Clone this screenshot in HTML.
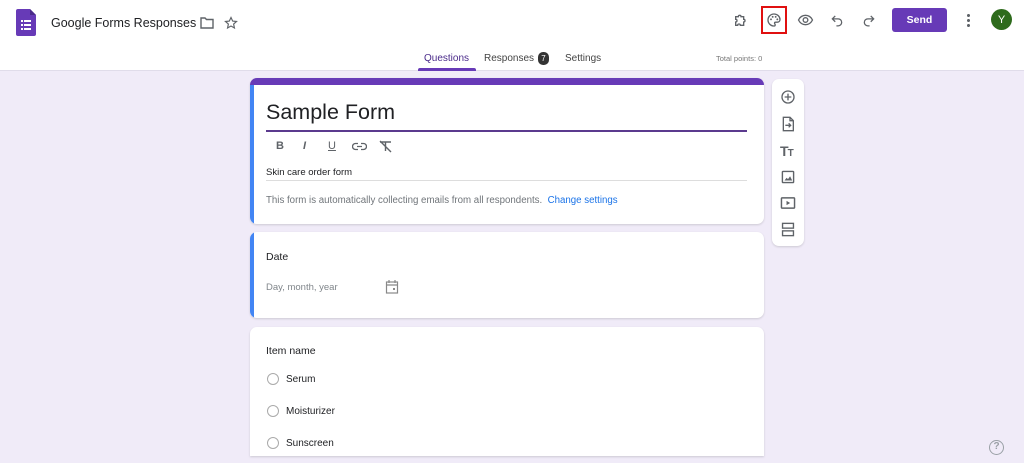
<!DOCTYPE html>
<html><head><meta charset="utf-8"><style>
*{box-sizing:border-box;margin:0;padding:0}
body{width:1024px;height:463px;overflow:hidden;background:#f0ebf8;font-family:"Liberation Sans",Arial,sans-serif;color:#202124;position:relative}
.hdr{position:absolute;left:0;top:0;width:1024px;height:71px;background:#fff;border-bottom:1px solid #e0dcea}
.abs{position:absolute}
.card{position:absolute;background:#fff;border-radius:7px;box-shadow:0 1px 2px rgba(0,0,0,.15)}
.t{font-size:10px;color:#202124}
svg{position:absolute}
.radio{position:absolute;width:12px;height:12px;border:1px solid #aaa;border-radius:50%}
</style></head><body>
<div class="hdr">
 <svg style="left:16px;top:9px" width="20" height="27" viewBox="0 0 20 27"><path d="M2 0h12l6 6v19a2 2 0 0 1-2 2H2a2 2 0 0 1-2-2V2a2 2 0 0 1 2-2z" fill="#673ab7"/><path d="M14 0v6h6z" fill="#4a2a8a"/><g fill="#fff"><rect x="5" y="11" width="2" height="2"/><rect x="8" y="11" width="7" height="2"/><rect x="5" y="15" width="2" height="2"/><rect x="8" y="15" width="7" height="2"/><rect x="5" y="19" width="2" height="2"/><rect x="8" y="19" width="7" height="2"/></g></svg>
 <div class="abs" style="left:51px;top:16px;font-size:12.5px;color:#202124">Google Forms Responses</div>
 <svg style="left:200px;top:17px" width="14" height="12" viewBox="0 0 14 12"><path d="M1 1h4l1.5 1.5H13v8.5H1z" fill="none" stroke="#5f6368" stroke-width="1.4"/></svg>
 <svg style="left:224px;top:16px" width="14" height="14" viewBox="0 0 24 24"><path d="M12 2.5l2.9 6.2 6.6.7-5 4.5 1.4 6.6L12 17.2l-5.9 3.3 1.4-6.6-5-4.5 6.6-.7z" fill="none" stroke="#5f6368" stroke-width="2"/></svg>
 <svg style="left:733px;top:12px" width="16" height="16" viewBox="0 0 24 24"><path d="M4 7h4a2 2 0 1 1 4 0h4v4a2 2 0 1 1 0 4v5h-5a2 2 0 1 0-4 0H4v-5a2 2 0 1 0 0-4z" fill="none" stroke="#5f6368" stroke-width="2"/></svg>
 <div class="abs" style="left:761px;top:6px;width:26px;height:28px;border:2px solid #e01010"></div>
 <svg style="left:766px;top:12px" width="16" height="16" viewBox="0 0 24 24"><path d="M12 3a9 9 0 0 0 0 18c1.2 0 1.8-.8 1.8-1.7 0-1.2-1-1.5-1-2.5 0-1 .8-1.5 1.8-1.5H17a4 4 0 0 0 4-4c0-4.5-4-8.3-9-8.3z" fill="none" stroke="#5f6368" stroke-width="2"/><circle cx="7.5" cy="11" r="1.4" fill="#5f6368"/><circle cx="10" cy="7.3" r="1.4" fill="#5f6368"/><circle cx="14.5" cy="7.3" r="1.4" fill="#5f6368"/><circle cx="17" cy="11" r="1.4" fill="#5f6368"/></svg>
 <svg style="left:797px;top:12px" width="17" height="16" viewBox="0 0 24 24"><path d="M1.5 12C4 7 8 5 12 5s8 2 10.5 7C20 17 16 19 12 19s-8-2-10.5-7z" fill="none" stroke="#5f6368" stroke-width="2"/><circle cx="12" cy="12" r="3.5" fill="none" stroke="#5f6368" stroke-width="2"/></svg>
 <svg style="left:830px;top:13px" width="14" height="14" viewBox="0 0 24 24"><path d="M9 5L4 10l5 5M4 10h10a6 6 0 0 1 0 12h-3" fill="none" stroke="#5f6368" stroke-width="2.2"/></svg>
 <svg style="left:862px;top:13px" width="14" height="14" viewBox="0 0 24 24"><path d="M15 5l5 5-5 5M20 10H10a6 6 0 0 0 0 12h3" fill="none" stroke="#5f6368" stroke-width="2.2"/></svg>
 <div class="abs" style="left:892px;top:8px;width:55px;height:24px;background:#673ab7;border-radius:3px;color:#fff;font-size:10.5px;font-weight:bold;text-align:center;line-height:24px">Send</div>
 <div class="abs" style="left:967px;top:13px;width:3px;height:15px;background:radial-gradient(circle,#5f6368 1.4px,transparent 1.6px) 0 0/3px 5px"></div>
 <div class="abs" style="left:991px;top:9px;width:21px;height:21px;border-radius:50%;background:#2e6b1c;color:#fff;font-size:11px;text-align:center;line-height:23px">Y</div>
 <div class="abs" style="left:424px;top:53px;font-size:10px;color:#4a2a8a">Questions</div>
 <div class="abs" style="left:418px;top:68px;width:58px;height:3px;background:#673ab7;border-radius:2px 2px 0 0"></div>
 <div class="abs" style="left:484px;top:53px;font-size:10px;color:#444">Responses</div>
 <div class="abs" style="left:538px;top:52px;width:11px;height:13px;border-radius:5px;background:#333;color:#fff;font-size:8px;text-align:center;line-height:13px">7</div>
 <div class="abs" style="left:565px;top:53px;font-size:10px;color:#444">Settings</div>
 <div class="abs" style="left:716px;top:54px;font-size:7.5px;color:#777">Total points: 0</div>
</div>

<div class="card" style="left:250px;top:78px;width:514px;height:146px;overflow:hidden">
 <div class="abs" style="left:0;top:0;width:514px;height:7px;background:#673ab7"></div>
 <div class="abs" style="left:0;top:7px;width:4px;height:139px;background:#4285f4"></div>
 <div class="abs" style="left:16px;top:22px;font-size:21.5px;color:#202124">Sample Form</div>
 <div class="abs" style="left:16px;top:52px;width:481px;height:2px;background:#5b3a8e"></div>
 <div class="abs" style="left:26px;top:62px;font-size:11px;font-weight:bold;color:#5f6368">B</div>
 <div class="abs" style="left:53px;top:62px;font-size:11px;font-style:italic;font-weight:bold;color:#5f6368">I</div>
 <div class="abs" style="left:78px;top:62px;font-size:11px;text-decoration:underline;color:#5f6368">U</div>
 <svg style="left:102px;top:64px" width="15" height="9" viewBox="0 0 15 9"><path d="M6 1.5H3.5a3 3 0 0 0 0 6H6M9 1.5h2.5a3 3 0 0 1 0 6H9M5 4.5h5" fill="none" stroke="#5f6368" stroke-width="1.3"/></svg>
 <svg style="left:129px;top:62px" width="13" height="13" viewBox="0 0 13 13"><path d="M1 2h11M6.5 2v9M1 1l11 11" fill="none" stroke="#5f6368" stroke-width="1.4"/></svg>
 <div class="abs" style="left:16px;top:89px;font-size:9.5px;color:#202124">Skin care order form</div>
 <div class="abs" style="left:16px;top:102px;width:481px;height:1px;background:#ddd"></div>
 <div class="abs" style="left:16px;top:117px;font-size:9.7px;color:#70757a">This form is automatically collecting emails from all respondents.&nbsp; <span style="color:#1a73e8">Change settings</span></div>
</div>

<div class="card" style="left:772px;top:79px;width:32px;height:167px">
 <svg style="left:8px;top:10px" width="16" height="16" viewBox="0 0 24 24"><circle cx="12" cy="12" r="9" fill="none" stroke="#5f6368" stroke-width="2"/><path d="M12 7v10M7 12h10" stroke="#5f6368" stroke-width="2"/></svg>
 <svg style="left:9px;top:37px" width="14" height="16" viewBox="0 0 20 24"><path d="M3 2h10l5 5v15H3z M13 2v5h5" fill="none" stroke="#5f6368" stroke-width="2"/><path d="M6 14h8M11 11l3 3-3 3" fill="none" stroke="#5f6368" stroke-width="2"/></svg>
 <div class="abs" style="left:8px;top:64px;font-size:14px;font-weight:bold;color:#5f6368;letter-spacing:-1px">T<span style="font-size:10px">T</span></div>
 <svg style="left:9px;top:91px" width="14" height="14" viewBox="0 0 20 20"><rect x="2" y="2" width="16" height="16" rx="1" fill="none" stroke="#5f6368" stroke-width="2"/><path d="M5 15l3-4 2 2 3-4 3 6z" fill="#5f6368"/></svg>
 <svg style="left:8px;top:117px" width="16" height="14" viewBox="0 0 22 18"><rect x="2" y="2" width="18" height="14" rx="1" fill="none" stroke="#5f6368" stroke-width="2"/><path d="M9 6v6l5-3z" fill="#5f6368"/></svg>
 <svg style="left:9px;top:143px" width="14" height="15" viewBox="0 0 20 22"><rect x="2" y="2" width="16" height="7" fill="none" stroke="#5f6368" stroke-width="2"/><rect x="2" y="13" width="16" height="7" fill="none" stroke="#5f6368" stroke-width="2"/></svg>
</div>

<div class="card" style="left:250px;top:232px;width:514px;height:86px;overflow:hidden">
 <div class="abs" style="left:0;top:0;width:4px;height:86px;background:#4285f4"></div>
 <div class="abs" style="left:16px;top:19px;font-size:10.5px">Date</div>
 <div class="abs" style="left:16px;top:50px;font-size:9.5px;color:#80868b">Day, month, year</div>
 <svg style="left:135px;top:47px" width="14" height="15" viewBox="0 0 14 15"><rect x="1.5" y="3" width="11" height="11" fill="none" stroke="#888" stroke-width="1.2"/><path d="M1.5 6h11M4 1v3M10 1v3" stroke="#888" stroke-width="1.2"/><rect x="8" y="9" width="2" height="2" fill="#888"/></svg>
</div>

<div class="card" style="left:250px;top:327px;width:514px;height:129px;border-radius:7px 7px 0 0">
 <div class="abs" style="left:16px;top:18px;font-size:10.5px">Item name</div>
 <div class="radio" style="left:17px;top:46px"></div><div class="abs t" style="left:36px;top:47px">Serum</div>
 <div class="radio" style="left:17px;top:78px"></div><div class="abs t" style="left:36px;top:79px">Moisturizer</div>
 <div class="radio" style="left:17px;top:110px"></div><div class="abs t" style="left:36px;top:111px">Sunscreen</div>
</div>

<div class="abs" style="left:989px;top:440px;width:15px;height:15px;border:1.5px solid #9aa0a6;border-radius:50%;color:#9aa0a6;font-size:10px;text-align:center;line-height:12px;font-weight:bold">?</div>
</body></html>
